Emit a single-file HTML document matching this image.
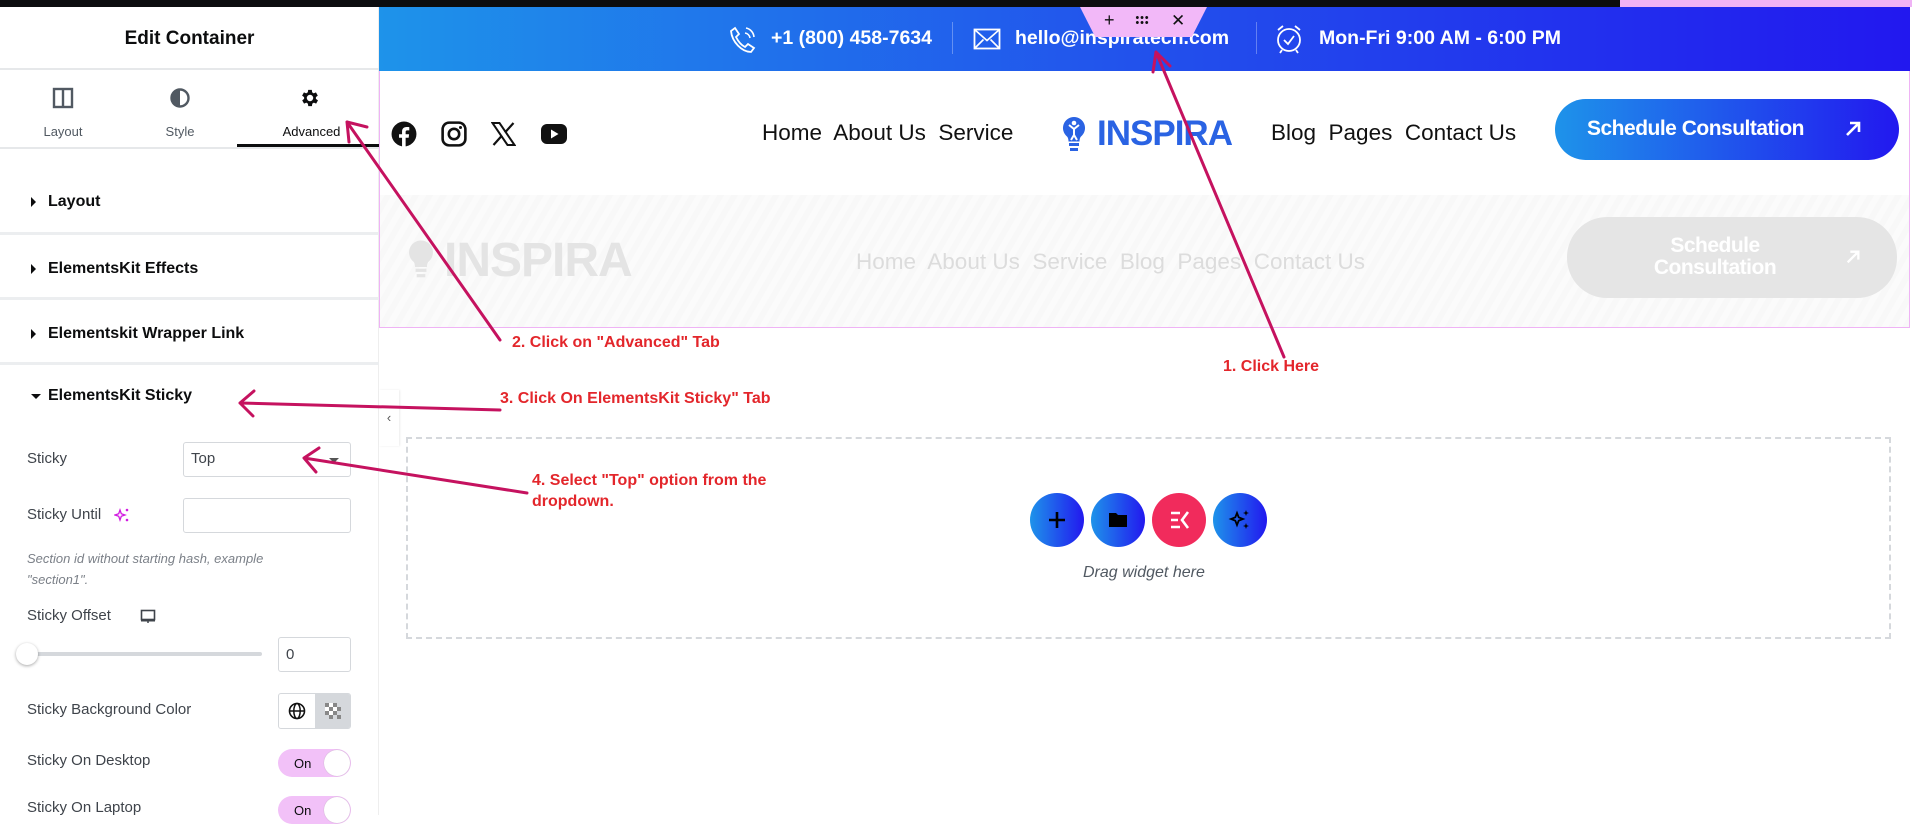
<!DOCTYPE html>
<html><head><meta charset="utf-8">
<style>
*{box-sizing:border-box;margin:0;padding:0}
body{width:1912px;height:815px;overflow:hidden;background:#fff;font-family:"Liberation Sans",sans-serif;position:relative}
.abs{position:absolute}
#topblack{left:0;top:0;width:1912px;height:7px;background:#0c0d0f}
#panel{left:0;top:7px;width:379px;height:808px;background:#fff;border-right:1px solid #eee}
.hdr{left:0;top:0;width:379px;height:63px;border-bottom:2px solid #e6e8ea;text-align:center;font-size:19px;font-weight:bold;line-height:63px;color:#0c0d0e}
.tab{top:63px;width:126px;height:77px;text-align:center;font-size:13px;color:#515962}
.tab svg{position:absolute;left:52px;top:17px}
.tab span{position:absolute;left:0;right:0;top:54px}
.sec{left:0;width:379px;border-bottom:3px solid #eceef0;font-size:16px;font-weight:bold;color:#0c0d0e}
.sec .t{position:absolute;left:48px}
.tri{position:absolute;left:31px;width:0;height:0;border-top:5px solid transparent;border-bottom:5px solid transparent;border-left:5px solid #0c0d0e}
.lbl{left:27px;font-size:15px;color:#3f444b}
.box{border:1px solid #d5d8dc;border-radius:3px;background:#fff}
.tog{left:278px;width:73px;height:28px;border-radius:14px;background:#f2c1f8;font-size:13px;color:#0c0d0e}
.tog span{position:absolute;left:16px;top:7px}
.tog i{position:absolute;right:1px;top:1px;width:26px;height:26px;border-radius:13px;background:#fff;box-shadow:0 0 1px #aaa}
#topbar{left:379px;top:7px;width:1531px;height:64px;background:linear-gradient(90deg,#1e93ea,#2251ec 50%,#2218ef)}
.tb{top:27px;color:#fff;font-size:19.5px;font-weight:600}
.nav{top:120px;font-size:22.5px;color:#111}
.ghost{color:#dcdcdc}
.red{color:#e3262b;font-family:"Liberation Sans Narrow","Liberation Sans",sans-serif;font-weight:bold;font-size:16px}
.circ{top:493px;width:54px;height:54px;border-radius:27px;background:linear-gradient(90deg,#1e93ea,#2218ef)}
.circ svg{position:absolute;left:15px;top:15px}
</style></head><body>
<div id="topblack" class="abs"></div>

<div id="panel" class="abs">
 <div class="hdr abs">Edit Container</div>
 <div class="tab abs" style="left:0">
  <svg width="22" height="22" viewBox="0 0 22 22"><rect x="2" y="2" width="18" height="18" fill="none" stroke="#515962" stroke-width="2.4"/><line x1="11" y1="2" x2="11" y2="20" stroke="#515962" stroke-width="2.4"/></svg>
  <span>Layout</span></div>
 <div class="tab abs" style="left:117px">
  <svg width="22" height="22" viewBox="0 0 22 22"><circle cx="11" cy="11" r="8.5" fill="none" stroke="#515962" stroke-width="2.4"/><path d="M11 2.5a8.5 8.5 0 0 0 0 17z" fill="#515962"/></svg>
  <span>Style</span></div>
 <div class="tab abs" style="left:244px;width:135px;color:#0c0d0e">
  <svg width="22" height="22" viewBox="0 0 24 24" style="left:55px"><path fill="#0c0d0e" d="M19.4 13a7.5 7.5 0 0 0 0-2l2.1-1.6-2-3.5-2.5 1a7 7 0 0 0-1.7-1L15 3.2h-4l-.4 2.7a7 7 0 0 0-1.7 1l-2.5-1-2 3.5L6.6 11a7.5 7.5 0 0 0 0 2l-2.1 1.6 2 3.5 2.5-1c.5.4 1.1.8 1.7 1l.4 2.7h4l.4-2.7c.6-.2 1.2-.6 1.7-1l2.5 1 2-3.5zM13 15.5a3.5 3.5 0 1 1 0-7 3.5 3.5 0 0 1 0 7z" transform="translate(-1 0)"/></svg>
  <span>Advanced</span></div>
 <div class="abs" style="left:237px;top:137px;width:142px;height:4px;background:#0c0d0e"></div>
 <div class="abs" style="left:0;top:140px;width:379px;height:2px;background:#e6e8ea"></div>

 <div class="sec abs" style="top:165px;height:63px"><i class="tri" style="top:25px"></i><span class="t" style="top:21px">Layout</span></div>
 <div class="sec abs" style="top:228px;height:65px"><i class="tri" style="top:29px"></i><span class="t" style="top:25px">ElementsKit Effects</span></div>
 <div class="sec abs" style="top:293px;height:65px"><i class="tri" style="top:29px"></i><span class="t" style="top:25px">Elementskit Wrapper Link</span></div>
 <div class="abs" style="left:31px;top:387px;width:0;height:0;border-left:5px solid transparent;border-right:5px solid transparent;border-top:5px solid #0c0d0e"></div>
 <div class="abs" style="left:48px;top:380px;font-size:16px;font-weight:bold;color:#0c0d0e">ElementsKit Sticky</div>

 <div class="lbl abs" style="top:443px">Sticky</div>
 <div class="box abs" style="left:183px;top:435px;width:168px;height:35px"><span class="abs" style="left:7px;top:7px;font-size:15px;color:#3f444b">Top</span><i class="abs" style="right:11px;top:15px;border-left:5px solid transparent;border-right:5px solid transparent;border-top:5px solid #555"></i></div>
 <div class="lbl abs" style="top:499px">Sticky Until</div>
 <svg class="abs" style="left:114px;top:500px" width="16" height="16" viewBox="0 0 16 16"><path d="M6 3l1.3 3.7L11 8 7.3 9.3 6 13 4.7 9.3 1 8l3.7-1.3z" fill="none" stroke="#d11ae0" stroke-width="1.3"/><circle cx="13" cy="3" r="1.3" fill="#d11ae0"/><circle cx="13" cy="13" r="1.3" fill="#d11ae0"/></svg>
 <div class="box abs" style="left:183px;top:491px;width:168px;height:35px"></div>
 <div class="abs" style="left:27px;top:541px;font-size:13px;font-style:italic;color:#7b8088;line-height:21px">Section id without starting hash, example<br>"section1".</div>
 <div class="lbl abs" style="top:600px">Sticky Offset</div>
 <svg class="abs" style="left:140px;top:602px" width="16" height="15" viewBox="0 0 16 15"><rect x="1.5" y="1.5" width="13" height="9" fill="none" stroke="#3f444b" stroke-width="1.6"/><line x1="1" y1="11.5" x2="15" y2="11.5" stroke="#3f444b" stroke-width="2"/><line x1="8" y1="12" x2="8" y2="14" stroke="#3f444b" stroke-width="1.5"/></svg>
 <div class="abs" style="left:27px;top:645px;width:235px;height:4px;border-radius:2px;background:#d5d8dc"></div>
 <div class="abs" style="left:16px;top:636px;width:22px;height:22px;border-radius:11px;background:#fff;box-shadow:0 1px 3px rgba(0,0,0,.35)"></div>
 <div class="box abs" style="left:278px;top:630px;width:73px;height:35px"><span class="abs" style="left:7px;top:8px;font-size:15px;color:#3f444b">0</span></div>
 <div class="lbl abs" style="top:694px">Sticky Background Color</div>
 <div class="box abs" style="left:278px;top:686px;width:73px;height:36px;overflow:hidden">
  <svg class="abs" style="left:9px;top:8px" width="18" height="18" viewBox="0 0 18 18"><circle cx="9" cy="9" r="7.5" fill="none" stroke="#111" stroke-width="1.6"/><ellipse cx="9" cy="9" rx="3.2" ry="7.5" fill="none" stroke="#111" stroke-width="1.5"/><line x1="1.5" y1="9" x2="16.5" y2="9" stroke="#111" stroke-width="1.5"/></svg>
  <div class="abs" style="left:36px;top:0;width:37px;height:36px;background:#d5d8dc"></div>
  <svg class="abs" style="left:46px;top:9px" width="16" height="16" viewBox="0 0 16 16"><g fill="#888"><rect x="0" y="0" width="4" height="4"/><rect x="8" y="0" width="4" height="4"/><rect x="4" y="4" width="4" height="4"/><rect x="12" y="4" width="4" height="4"/><rect x="0" y="8" width="4" height="4"/><rect x="8" y="8" width="4" height="4"/><rect x="4" y="12" width="4" height="4"/><rect x="12" y="12" width="4" height="4"/></g><g fill="#fff"><rect x="4" y="0" width="4" height="4"/><rect x="0" y="4" width="4" height="4"/><rect x="8" y="4" width="4" height="4"/><rect x="4" y="8" width="4" height="4"/></g></svg>
 </div>
 <div class="lbl abs" style="top:745px">Sticky On Desktop</div>
 <div class="tog abs" style="top:742px"><span>On</span><i></i></div>
 <div class="lbl abs" style="top:792px">Sticky On Laptop</div>
 <div class="tog abs" style="top:789px"><span>On</span><i></i></div>
</div>
<div class="abs" style="left:379px;top:390px;width:20px;height:56px;background:#fff;box-shadow:1px 0 2px rgba(0,0,0,.08);font-size:13px;color:#555;text-align:center;line-height:56px">‹</div>

<div class="abs" style="left:379px;top:7px;width:1531px;height:321px;border:1px solid #efb3f5;border-top:none"></div>
<div id="topbar" class="abs"></div>
<div class="abs" style="left:1620px;top:0;width:292px;height:7px;background:#efb3f5"></div>
<svg class="abs" style="left:729px;top:25px" width="28" height="30" viewBox="0 0 28 30"><path d="M6 3l4 6-3 3c2 4 5 8 9 10l3-3 6 4-3 4C13 27 3 17 2 6z" fill="none" stroke="#fff" stroke-width="1.8"/><path d="M16 8a6 6 0 0 1 5 5M17 3a10 10 0 0 1 8 9" fill="none" stroke="#fff" stroke-width="1.6"/></svg>
<div class="tb abs" style="left:771px">+1 (800) 458-7634</div>
<div class="abs" style="left:952px;top:22px;width:1px;height:32px;background:rgba(255,255,255,.3)"></div>
<svg class="abs" style="left:973px;top:28px" width="28" height="22" viewBox="0 0 28 22"><rect x="1.5" y="1.5" width="25" height="19" fill="none" stroke="#fff" stroke-width="1.8"/><path d="M1.5 1.5l12.5 11 12.5-11M1.5 20.5l9-9M26.5 20.5l-9-9" fill="none" stroke="#fff" stroke-width="1.6"/></svg>
<div class="tb abs" style="left:1015px">hello@inspiratech.com</div>
<div class="abs" style="left:1256px;top:22px;width:1px;height:32px;background:rgba(255,255,255,.3)"></div>
<svg class="abs" style="left:1275px;top:24px" width="28" height="30" viewBox="0 0 28 30"><circle cx="14" cy="16" r="11" fill="none" stroke="#fff" stroke-width="1.8"/><path d="M9 16l4 4 6-8M3 6l5-4M25 6l-5-4M7 26l-2 3M21 26l2 3" fill="none" stroke="#fff" stroke-width="1.8"/></svg>
<div class="tb abs" style="left:1319px">Mon-Fri 9:00 AM - 6:00 PM</div>
<div class="abs" style="left:1080px;top:7px;width:127px;height:30px;background:#f2b8f8;clip-path:polygon(0 0,100% 0,88% 100%,12% 100%)"></div>
<div class="abs" style="left:1104px;top:10px;font-size:18px;color:#111">+</div>
<div class="abs" style="left:1135px;top:15px;width:14px;height:10px;background:radial-gradient(circle,#111 1.3px,transparent 1.6px) 0 0/4.7px 5px"></div>
<div class="abs" style="left:1171px;top:11px;font-size:17px;color:#111">✕</div>

<svg class="abs" style="left:391px;top:121px" width="26" height="26" viewBox="0 0 24 24"><circle cx="12" cy="12" r="11.5" fill="#111"/><path d="M13.5 24v-8.5h2.8l.4-3.3h-3.2v-2c0-1 .3-1.6 1.7-1.6h1.7V5.6c-.3 0-1.3-.1-2.5-.1-2.5 0-4.2 1.5-4.2 4.3v2.4H7.4v3.3h2.8V24z" fill="#fff"/></svg>
<svg class="abs" style="left:441px;top:121px" width="26" height="26" viewBox="0 0 24 24"><rect x="1.5" y="1.5" width="21" height="21" rx="6" fill="none" stroke="#111" stroke-width="2.4"/><circle cx="12" cy="12" r="4.8" fill="none" stroke="#111" stroke-width="2.4"/><circle cx="18" cy="6" r="1.4" fill="#111"/></svg>
<svg class="abs" style="left:491px;top:122px" width="25" height="24" viewBox="0 0 24 24"><path d="M1 1h7l15 22h-7z" fill="none" stroke="#111" stroke-width="2"/><path d="M22 1L13.5 10.5M2 23l8.5-9.5" stroke="#111" stroke-width="2.2"/></svg>
<svg class="abs" style="left:541px;top:124px" width="26" height="20" viewBox="0 0 26 20"><rect x="0" y="0" width="26" height="20" rx="6" fill="#111"/><path d="M10 5.5v9l7.5-4.5z" fill="#fff"/></svg>
<div class="nav abs" style="left:762px">Home&nbsp; About Us&nbsp; Service</div>
<svg class="abs" style="left:1062px;top:116px" width="24" height="38" viewBox="0 0 24 38"><path d="M12 1a11 11 0 0 0-7 19.5c1 1 1.5 3 1.5 5h11c0-2 .5-4 1.5-5A11 11 0 0 0 12 1z" fill="#2a63e3"/><circle cx="12" cy="7" r="2.3" fill="#fff"/><path d="M7 9l5 4 5-4M12 13v6M9 24l3-5 3 5" stroke="#fff" stroke-width="2" fill="none"/><rect x="7" y="27" width="10" height="3" fill="#2a63e3"/><rect x="8" y="32" width="8" height="3" fill="#2a63e3"/></svg>
<div class="abs" style="left:1097px;top:114px;font-size:35px;font-weight:bold;color:#2a63e3;letter-spacing:-1px">INSPIRA</div>
<div class="nav abs" style="left:1271px">Blog&nbsp; Pages&nbsp; Contact Us</div>
<div class="abs" style="left:1555px;top:99px;width:344px;height:61px;border-radius:31px;background:linear-gradient(90deg,#1e93ea,#2218ef)"></div>
<div class="abs" style="left:1587px;top:117px;font-size:21px;font-weight:bold;color:#fff;letter-spacing:-.5px">Schedule Consultation</div>
<svg class="abs" style="left:1844px;top:120px" width="18" height="18" viewBox="0 0 18 18"><path d="M3 15L15 3M6 3h9v9" stroke="#fff" stroke-width="2.6" fill="none"/></svg>

<div class="abs" style="left:380px;top:195px;width:1529px;height:132px;background:repeating-linear-gradient(-60deg,#f8f8f8 0 6px,#fbfbfb 6px 12px)"></div>
<svg class="abs" style="left:408px;top:237px" width="26" height="46" viewBox="0 0 24 38"><path d="M12 1a11 11 0 0 0-7 19.5c1 1 1.5 3 1.5 5h11c0-2 .5-4 1.5-5A11 11 0 0 0 12 1z" fill="#e4e4e4"/><rect x="7" y="27" width="10" height="3" fill="#e4e4e4"/><rect x="8" y="32" width="8" height="3" fill="#e4e4e4"/></svg>
<div class="abs" style="left:444px;top:233px;font-size:48px;font-weight:bold;color:#e4e4e4;letter-spacing:-1px">INSPIRA</div>
<div class="nav abs ghost" style="left:856px;top:249px">Home&nbsp; About Us&nbsp; Service&nbsp; Blog&nbsp; Pages&nbsp; Contact Us</div>
<div class="abs" style="left:1567px;top:217px;width:330px;height:81px;border-radius:40px;background:#e5e5e5"></div>
<div class="abs" style="left:1630px;top:235px;width:170px;text-align:center;font-size:21px;font-weight:bold;color:#fff;line-height:22px;letter-spacing:-.5px">Schedule<br>Consultation</div>
<svg class="abs" style="left:1845px;top:249px" width="16" height="16" viewBox="0 0 18 18"><path d="M3 15L15 3M6 3h9v9" stroke="#fff" stroke-width="2.6" fill="none"/></svg>

<div class="abs" style="left:406px;top:437px;width:1485px;height:202px;border:2px dashed #d5d8dc"></div>
<div class="circ abs" style="left:1030px"><svg width="24" height="24" viewBox="0 0 24 24"><path d="M12 4v16M4 12h16" stroke="#000" stroke-width="2.6"/></svg></div>
<div class="circ abs" style="left:1091px"><svg width="24" height="24" viewBox="0 0 24 24"><path d="M3 5h7l2 2h9v12H3z" fill="#000"/></svg></div>
<div class="circ abs" style="left:1152px;background:#f12b5c"><svg width="24" height="24" viewBox="0 0 24 24"><path d="M4 5h9M4 12h7M4 19h9" stroke="#fff" stroke-width="2.6"/><path d="M21 4l-6 8 6 8" stroke="#fff" stroke-width="2.6" fill="none"/></svg></div>
<div class="circ abs" style="left:1213px"><svg width="24" height="24" viewBox="0 0 24 24"><path d="M9 5l1.7 4.3L15 11l-4.3 1.7L9 17l-1.7-4.3L3 11l4.3-1.7z" fill="none" stroke="#000" stroke-width="1.8"/><path d="M18 2l.8 2.2L21 5l-2.2.8L18 8l-.8-2.2L15 5l2.2-.8zM18 15l.8 2.2 2.2.8-2.2.8L18 21l-.8-2.2L15 18l2.2-.8z" fill="#000"/></svg></div>
<div class="abs" style="left:1083px;top:564px;font-size:16px;font-style:italic;color:#515962">Drag widget here</div>

<div class="red abs" style="left:512px;top:334px">2. Click on "Advanced" Tab</div>
<div class="red abs" style="left:1223px;top:358px">1. Click Here</div>
<div class="red abs" style="left:500px;top:390px">3. Click On ElementsKit Sticky" Tab</div>
<div class="red abs" style="left:532px;top:470px;line-height:21px">4. Select "Top" option from the<br>dropdown.</div>
<svg class="abs" style="left:0;top:0" width="1912" height="815" viewBox="0 0 1912 815">
<g stroke="#c5125f" stroke-width="3" fill="none" stroke-linecap="round">
<path d="M1284 357L1156 52M1156 52l-3 20M1156 52l14 14"/>
<path d="M500 340L347 122M347 122l2 20M347 122l20 5"/>
<path d="M500 410L240 403M240 403l14-12M240 403l13 13"/>
<path d="M527 493L304 458M304 458l15-10M304 458l12 14"/>
</g></svg>
</body></html>
